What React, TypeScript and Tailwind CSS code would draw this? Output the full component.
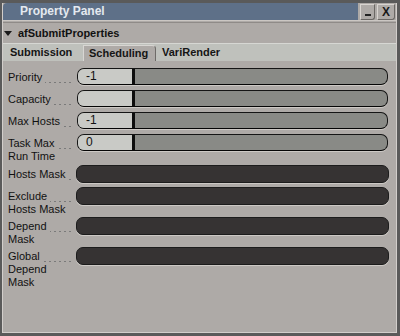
import React from 'react';

const font = { fontFamily: '"Liberation Sans", Arial, sans-serif' };

type Row = {
  lines: string[];
  kind: 'slider' | 'text';
  value?: string;
  height: string;
};

const rows: Row[] = [
  { lines: ['Priority'], kind: 'slider', value: '-1', height: 'h-[22px]' },
  { lines: ['Capacity'], kind: 'slider', value: '', height: 'h-[22px]' },
  { lines: ['Max Hosts'], kind: 'slider', value: '-1', height: 'h-[22px]' },
  { lines: ['Task Max', 'Run Time'], kind: 'slider', value: '0', height: 'h-[31px]' },
  { lines: ['Hosts Mask'], kind: 'text', height: 'h-[22px]' },
  { lines: ['Exclude', 'Hosts Mask'], kind: 'text', height: 'h-[30px]' },
  { lines: ['Depend', 'Mask'], kind: 'text', height: 'h-[30px]' },
  { lines: ['Global', 'Depend', 'Mask'], kind: 'text', height: 'h-[40px]' },
];

function Label({ lines }: { lines: string[] }) {
  return (
    <div className="w-[74px] shrink-0 pl-[5px] pt-[3px] text-[11px] leading-[13px] text-[#111]">
      <div className="flex items-end mr-[6px]">
        <span className="whitespace-nowrap">{lines[0]}</span>
        <span className="flex-1 h-px mb-[1px] ml-[3px] bg-[repeating-linear-gradient(to_left,#7a7a7a_0_2px,transparent_2px_5px)]" />
      </div>
      {lines.slice(1).map((l) => (
        <div key={l} className="whitespace-nowrap">
          {l}
        </div>
      ))}
    </div>
  );
}

function Slider({ value }: { value?: string }) {
  return (
    <div className="w-[311px] h-[17px] rounded-[7px] border border-[#151515] border-b-[#050505] bg-[#898a86] overflow-hidden flex shadow-[0_1px_0_#cdc9c5]">
      <div className="w-[57px] h-full bg-[#c9cac6] border-r-[3px] border-[#0d0d0d] pl-[8px] text-[12px] leading-[15px] text-[#111]">
        {value}
      </div>
    </div>
  );
}

function TextField() {
  return (
    <div className="-ml-px w-[313px] h-[18px] rounded-[7px] border border-[#1c1c1c] bg-[#363333] shadow-[0_1px_0_#cdc9c5]" />
  );
}

export default function App() {
  return (
    <div className="w-[400px] h-[336px] bg-[#5a5a5a] pt-[3px] pl-[2px] pr-[3px] pb-[3px]" style={font}>
      <div className="h-full flex flex-col bg-[#aeaaa7] border-l border-r border-b border-[#d2cecb]">
        {/* Title bar */}
        <div className="h-[17px] flex shrink-0">
          <div className="w-[355px] h-full rounded-tl-[4px] bg-[#5e7088] pl-[17px] text-[12px] font-bold leading-[17px] text-[#e4e9ef]">
            Property Panel
          </div>
          <div className="ml-[2px] mt-[1px] w-[15px] h-[16px] rounded-br-[3px] border-t border-l border-[#d8d4d0] border-r border-b border-r-[#6a6764] border-b-[#6a6764] flex items-end justify-center pb-[3px]">
            <div className="w-[6px] h-[2px] bg-[#222]" />
          </div>
          <div className="ml-[2px] mt-[1px] w-[18px] h-[16px] rounded-br-[3px] border-t border-l border-[#d8d4d0] border-r border-b border-r-[#6a6764] border-b-[#6a6764] flex items-center justify-center text-[12px] font-bold leading-none text-[#1a1a1a]">
            X
          </div>
        </div>
        <div className="h-[3px] shrink-0 border-t border-[#cbc7c3] border-b border-b-[#8f8b88]" />

        {/* Header */}
        <div className="h-[20px] shrink-0 flex items-center pl-[1px]">
          <svg width="9" height="6" viewBox="0 0 9 6" className="mr-[5px] mt-[1px]">
            <path d="M0 0 H8 L4 5 Z" fill="#1a1a1a" />
          </svg>
          <span className="text-[11px] font-bold text-[#111]">afSubmitProperties</span>
        </div>

        {/* Tabs */}
        <div className="h-[18px] shrink-0 flex items-end bg-[#bfc1bc] border-t border-[#d6d7d3] text-[11px] font-bold text-[#151515]">
          <div className="w-[80px] h-full pl-[7px] leading-[17px]">Submission</div>
          <div className="w-[73px] h-[16px] pl-[5px] leading-[15px] bg-[#aeaaa7] rounded-tr-[4px] border-t border-l border-[#d8d6d3] border-r border-r-[#6e6b68]">
            Scheduling
          </div>
          <div className="h-full pl-[6px] leading-[17px]">VariRender</div>
        </div>

        {/* Rows */}
        <div className="pt-[7px] flex flex-col">
          {rows.map((r) => (
            <div key={r.lines.join(' ')} className={`${r.height} flex items-start`}>
              <Label lines={r.lines} />
              {r.kind === 'slider' ? <Slider value={r.value} /> : <TextField />}
            </div>
          ))}
        </div>
      </div>
    </div>
  );
}
